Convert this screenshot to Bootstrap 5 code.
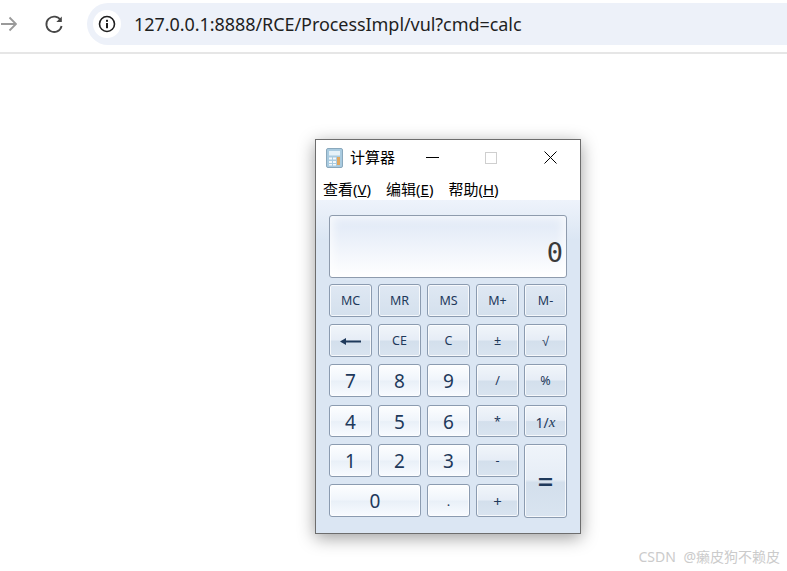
<!doctype html>
<html lang="zh"><head><meta charset="utf-8">
<link href="https://cdn.jsdelivr.net/npm/bootstrap@5.3.0/dist/css/bootstrap.min.css" rel="stylesheet">
<style>
html,body{height:100%;background:#fff;overflow:hidden}
body{position:relative;font-family:"Noto Sans","Noto Sans CJK SC",sans-serif}
.toolbar{height:54px;padding:3px 0 0 0;border-bottom:2px solid #e6e6e6;align-items:flex-start}
.tb-icon{flex:none;height:42px}
.tb-fwd{width:17px;margin-right:27px}
.tb-reload{width:20px;margin-right:23px}
.addr{flex:1;min-width:0;height:42px;background:#edf1f9;border-radius:21px 0 0 21px;padding-left:6px;gap:13px}
.addr-dot{width:28px;height:28px;background:#fff;border-radius:50%;flex:none}
.addr-text{font-size:18px;color:#1f1f1f;letter-spacing:-.06px;white-space:nowrap}
.calcwin{position:absolute;left:315px;top:139px;width:266px;height:395px;background:#d9e4f1;border:1px solid #6d6d6d;box-shadow:0 4px 16px rgba(0,0,0,.38)}
.win-top{background:#fff;height:60px;flex:none}
.win-title{height:35px;padding-left:10px;font-size:15px;color:#000}
.win-name{margin-left:7px;width:76px}
.ctl-min{margin-right:46px}
.ctl-max{margin-right:47px}
.menus{height:25px;padding:3px 0 0 7px;gap:15px;font-size:15px;color:#000;align-items:flex-start;line-height:22px}
.menus u{text-underline-offset:1px}
.win-body{flex:1;padding:15px 13px 0;background:linear-gradient(#eef3fb,#dbe6f3 40px)}
.lcd{height:63px;border:1px solid #8e9bad;border-radius:3px;background:linear-gradient(#dfe8f6,#fff);box-shadow:inset 0 0 10px 3px rgba(255,255,255,.75);font-family:"DejaVu Sans Mono",monospace;font-size:27px;color:#3a3a3a;padding:20px 3px 0 0;line-height:34px;text-align:right}
.pad{margin-top:6px;display:grid;grid-template-columns:43px 43px 43px 42px 43px;grid-template-rows:33px 33px 34px 32px 33px 33px;column-gap:6px;row-gap:7px}
.key{border:1px solid #8b9bb0;border-radius:3px;color:#1e395b;display:flex;align-items:center;justify-content:center;font-size:12.5px;padding-top:2px;box-shadow:inset 0 0 0 1px rgba(255,255,255,.75);background:linear-gradient(#f1f5fa,#e6edf6 48%,#d3dfec 52%,#d9e4f0)}
.key:nth-child(n+11):nth-child(-n+15){margin-bottom:1px}
.key-col4{margin-right:-1px}
.key-m{background:linear-gradient(#dfe8f3,#d4e0ed)}
.key-n{font-size:19px;background:linear-gradient(#fdfeff,#f0f5fb 48%,#e9f0f8 52%,#f8fbff)}
.key-eq{grid-row:span 2;grid-column:5;font-size:28px;font-weight:500;height:74px;padding-top:0;background:linear-gradient(#eff4fa,#e6edf6 48%,#d3dfec 52%,#d9e4f0)}
.key-zero{grid-column:span 2}
.key-dot{font-size:13px}
.key-plus{font-size:15px}
.key-sqrt{font-family:"Liberation Sans",sans-serif;font-size:13px}
.key-x{font-size:14px}
.key-x i{font-family:"Liberation Serif",serif;font-size:15px}
.mark-csdn{position:absolute;right:7px;bottom:4px;font-size:14px;color:#cbcbcb;word-spacing:4px}
</style></head><body>
<div class="toolbar d-flex">
<svg class="tb-icon tb-fwd" viewBox="0 0 17 42"><path d="M1 21H16M9.500 14.500L16 21L9.500 27.500" fill="none" stroke="#9a9a9a" stroke-width="1.800"/></svg>
<svg class="tb-icon tb-reload" viewBox="0 0 20 42"><path d="M16.800 17.500A7.700 7.700 0 1 0 17.600 23" fill="none" stroke="#474747" stroke-width="1.800"/><path d="M17.800 13.500V19H12.300Z" fill="#474747"/></svg>
<div class="addr d-flex align-items-center">
<div class="addr-dot d-flex align-items-center justify-content-center"><svg width="18" height="18" viewBox="0 0 18 18"><circle cx="9" cy="9" r="7.500" fill="none" stroke="#1f1f1f" stroke-width="1.600"/><rect x="8" y="8" width="2" height="5.200" fill="#1f1f1f"/><rect x="8" y="4.800" width="2" height="2" fill="#1f1f1f"/></svg></div>
<div class="addr-text">127.0.0.1:8888/RCE/ProcessImpl/vul?cmd=calc</div>
</div>
</div>
<div class="calcwin d-flex flex-column">
<div class="win-top">
<div class="win-title d-flex align-items-center">
<svg width="17" height="20" viewBox="0 0 17 20"><rect x=".5" y=".5" width="16" height="19" rx="1.500" fill="#a9cbe0" stroke="#8aa8bc"/><rect x="3" y="3" width="11" height="4.500" fill="#e6f2f8"/><rect x="11" y="9" width="3" height="8" fill="#e0a860"/><g fill="#f5f9fb"><rect x="3" y="9.500" width="3" height="2"/><rect x="7" y="9.500" width="3" height="2"/><rect x="3" y="13" width="3" height="2"/><rect x="7" y="13" width="3" height="2"/><rect x="3" y="16" width="3" height="1.500"/><rect x="7" y="16" width="3" height="1.500"/></g></svg>
<span class="win-name">计算器</span>
<svg class="ctl-min" width="13" height="13" viewBox="0 0 13 13"><path d="M0 6.500H13" stroke="#000" stroke-width="1"/></svg>
<svg class="ctl-max" width="12" height="12" viewBox="0 0 12 12"><rect x=".5" y=".5" width="11" height="11" fill="none" stroke="#cfcfcf"/></svg>
<svg width="13" height="13" viewBox="0 0 13 13"><path d="M.5 .5L12.500 12.500M12.500 .5L.5 12.500" stroke="#000" stroke-width="1"/></svg>
</div>
<div class="menus d-flex"><span>查看(<u>V</u>)</span><span>编辑(<u>E</u>)</span><span>帮助(<u>H</u>)</span></div>
</div>
<div class="win-body">
<div class="lcd">0</div>
<div class="pad">
<div class="key key-m">MC</div><div class="key key-m">MR</div><div class="key key-m">MS</div><div class="key key-m key-col4">M+</div><div class="key key-m">M-</div>
<div class="key"><svg width="21" height="9" viewBox="0 0 21 9"><path d="M3 4.500H21" stroke="#1e395b" stroke-width="2"/><path d="M0 4.500L6 1V8Z" fill="#1e395b"/></svg></div><div class="key">CE</div><div class="key">C</div><div class="key key-col4">±</div><div class="key key-sqrt">√</div>
<div class="key key-n">7</div><div class="key key-n">8</div><div class="key key-n">9</div><div class="key key-col4">/</div><div class="key">%</div>
<div class="key key-n">4</div><div class="key key-n">5</div><div class="key key-n">6</div><div class="key key-col4">*</div><div class="key key-x">1/<i>x</i></div>
<div class="key key-n">1</div><div class="key key-n">2</div><div class="key key-n">3</div><div class="key key-col4">-</div><div class="key key-eq">=</div>
<div class="key key-n key-zero">0</div><div class="key key-n key-dot">.</div><div class="key key-col4 key-plus">+</div>
</div>
</div>
</div>
<div class="mark-csdn">CSDN @癞皮狗不赖皮</div>
</body></html>
